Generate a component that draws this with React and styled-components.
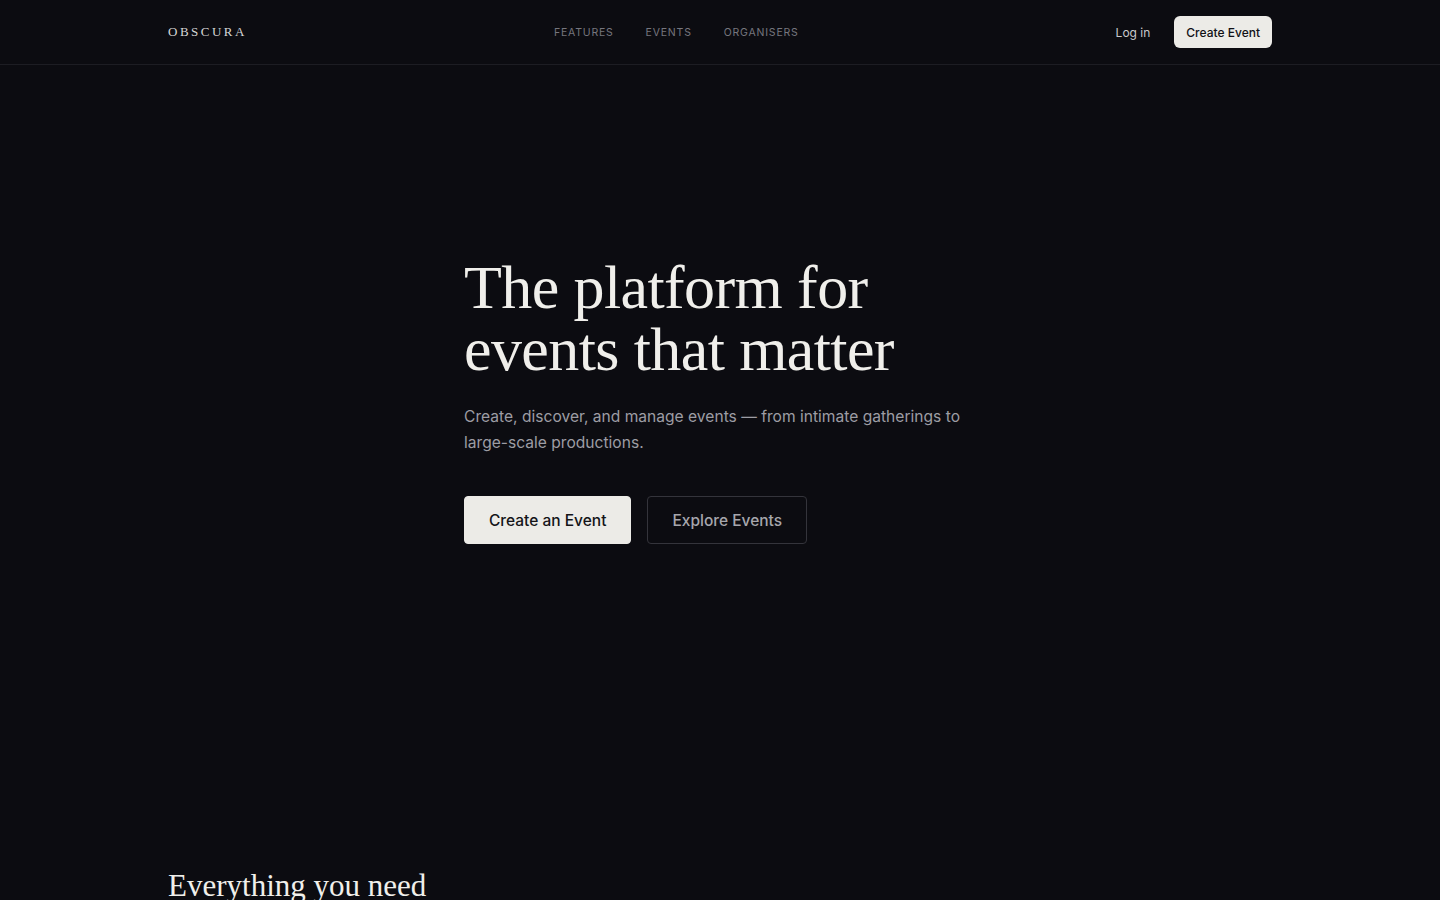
import React from "react";
import styled, { createGlobalStyle } from "styled-components";

const GlobalStyle = createGlobalStyle`
  * { box-sizing: border-box; }
  html, body {
    margin: 0;
    padding: 0;
    background: #0c0c11;
    color: #ecebe7;
    font-family: Inter, "Noto Sans", sans-serif;
    -webkit-font-smoothing: antialiased;
  }
`;

const serif = `"Liberation Serif", "DejaVu Serif", serif`;

const Page = styled.div`
  min-height: 100vh;
  background: #0c0c11;
`;

const NavBar = styled.header`
  height: 65px;
  border-bottom: 1px solid #1d1d23;
`;

const Container = styled.div`
  max-width: 1104px;
  margin: 0 auto;
  height: 100%;
`;

const NavInner = styled(Container)`
  display: flex;
  align-items: center;
  justify-content: space-between;
`;

const Logo = styled.a`
  font-family: ${serif};
  font-size: 13px;
  letter-spacing: 2.5px;
  color: #d6d6d6;
  text-decoration: none;
`;

const NavLinks = styled.nav`
  display: flex;
  gap: 32px;
  margin-right: 10px;
`;

const NavLink = styled.a`
  font-size: 10.5px;
  letter-spacing: 0.8px;
  text-transform: uppercase;
  color: #76767e;
  text-decoration: none;
`;

const NavRight = styled.div`
  display: flex;
  align-items: center;
  gap: 24px;
`;

const LoginLink = styled.a`
  font-size: 12px;
  color: #c9c9cc;
  text-decoration: none;
`;

const SmallButton = styled.button`
  height: 32px;
  padding: 0 12px;
  border: none;
  border-radius: 6px;
  background: #ecebe7;
  color: #111116;
  font-family: inherit;
  font-size: 12px;
  font-weight: 500;
`;

const Hero = styled.section`
  height: 670px;
  display: flex;
  align-items: center;
  justify-content: center;
`;

const HeroContent = styled.div`
  width: 512px;
`;

const Headline = styled.h1`
  font-family: ${serif};
  font-weight: 400;
  font-size: 62px;
  line-height: 62px;
  letter-spacing: -0.6px;
  color: #f0efeb;
  margin: 0 0 24px;
`;

const Lead = styled.p`
  font-size: 15.6px;
  line-height: 26px;
  color: #9d9da4;
  margin: 0 0 40px;
  width: 520px;
`;

const Actions = styled.div`
  display: flex;
  gap: 16px;
`;

const Button = styled.button`
  height: 48px;
  padding: 0 24px;
  border-radius: 4px;
  font-family: inherit;
  font-size: 15.5px;
  font-weight: 500;
  background: ${({ $primary }) => ($primary ? "#ecebe7" : "transparent")};
  color: ${({ $primary }) => ($primary ? "#141418" : "#a6a6ac")};
  border: 1px solid ${({ $primary }) => ($primary ? "#ecebe7" : "#34343b")};
`;

const Features = styled.section`
  padding-top: 131px;
`;

const SectionTitle = styled.h2`
  font-family: ${serif};
  font-weight: 400;
  font-size: 31px;
  line-height: 40px;
  color: #f0efeb;
  margin: 0;
`;

export default function App() {
  return (
    <Page>
      <GlobalStyle />
      <NavBar>
        <NavInner>
          <Logo href="#">OBSCURA</Logo>
          <NavLinks>
            <NavLink href="#">Features</NavLink>
            <NavLink href="#">Events</NavLink>
            <NavLink href="#">Organisers</NavLink>
          </NavLinks>
          <NavRight>
            <LoginLink href="#">Log in</LoginLink>
            <SmallButton>Create Event</SmallButton>
          </NavRight>
        </NavInner>
      </NavBar>
      <Hero>
        <HeroContent>
          <Headline>
            The platform for
            <br />
            events that matter
          </Headline>
          <Lead>
            Create, discover, and manage events — from intimate gatherings to
            large-scale productions.
          </Lead>
          <Actions>
            <Button $primary>Create an Event</Button>
            <Button>Explore Events</Button>
          </Actions>
        </HeroContent>
      </Hero>
      <Features>
        <Container>
          <SectionTitle>Everything you need</SectionTitle>
        </Container>
      </Features>
    </Page>
  );
}
